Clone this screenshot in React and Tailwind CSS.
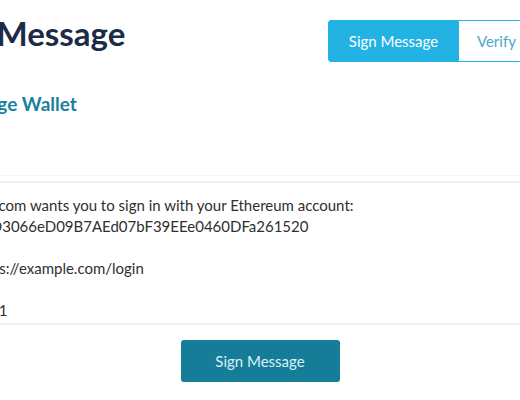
import { useState } from 'react';

const message = [
  'example.com wants you to sign in with your Ethereum account:',
  '0xC7a5D3066eD09B7AEd07bF39EEe0460DFa261520',
  '',
  'URI: https://example.com/login',
  'Version: 1',
  'Chain ID: 1',
];

// small per-line nudges so the cut-off left edge lines up with the original
const nudge = ['', '', '', '', 'ml-[-6px]', 'ml-[-6px]'];

const App = () => {
  const [mode, setMode] = useState('sign'); // which tab is active

  return (
    <div className="min-h-[400px] bg-white overflow-hidden font-['Lato','Liberation_Sans',sans-serif]">
      <div className="w-[660px] ml-[-70px] pt-[17px]">
        {/* Header row */}
        <div className="flex justify-between items-start">
          <h1 className="ml-[-4px] text-[33px] leading-[32px] font-bold text-[#1d2b47]">Sign Message</h1>
          <div className="flex mt-[3px] h-[42px]">
            <button
              onClick={() => setMode('sign')}
              className={`w-[131px] rounded-l-[3px] border border-[#22b2e4] text-[15px] ${
                mode === 'sign' ? 'bg-[#22b2e4] text-white' : 'bg-white text-[#4da6c8]'
              }`}
            >
              Sign Message
            </button>
            <button
              onClick={() => setMode('verify')}
              className={`w-[131px] pl-[6px] rounded-r-[3px] border border-l-0 border-[#22b2e4] text-[15px] ${
                mode === 'verify' ? 'bg-[#22b2e4] text-white' : 'bg-white text-[#4da6c8]'
              }`}
            >
              Verify Message
            </button>
          </div>
        </div>

        <h2 className="mt-[30px] ml-[-14px] text-[19px] leading-[24px] font-bold text-[#1b7f9e]">Use Storage Wallet</h2>

        {/* Message box */}
        <div className="mt-[59px] border-t border-[#f6f6f6] pt-[5px]">
          <div className="border-t-[2px] border-b-[2px] border-[#efefef] px-[10px] pt-[12px] pb-[2px] text-[15px] leading-[21px] text-[#2f2f2f]">
            {message.map((line, i) => (
              <div key={i} className={`h-[21px] whitespace-pre ${nudge[i]}`}>
                {line}
              </div>
            ))}
          </div>
        </div>

        <div className="flex justify-center mt-[15px]">
          <button className="w-[159px] h-[42px] rounded-[3px] bg-[#157d98] text-[15px] text-[#d9f1f6]">
            Sign Message
          </button>
        </div>
      </div>
    </div>
  );
};

export default App;
